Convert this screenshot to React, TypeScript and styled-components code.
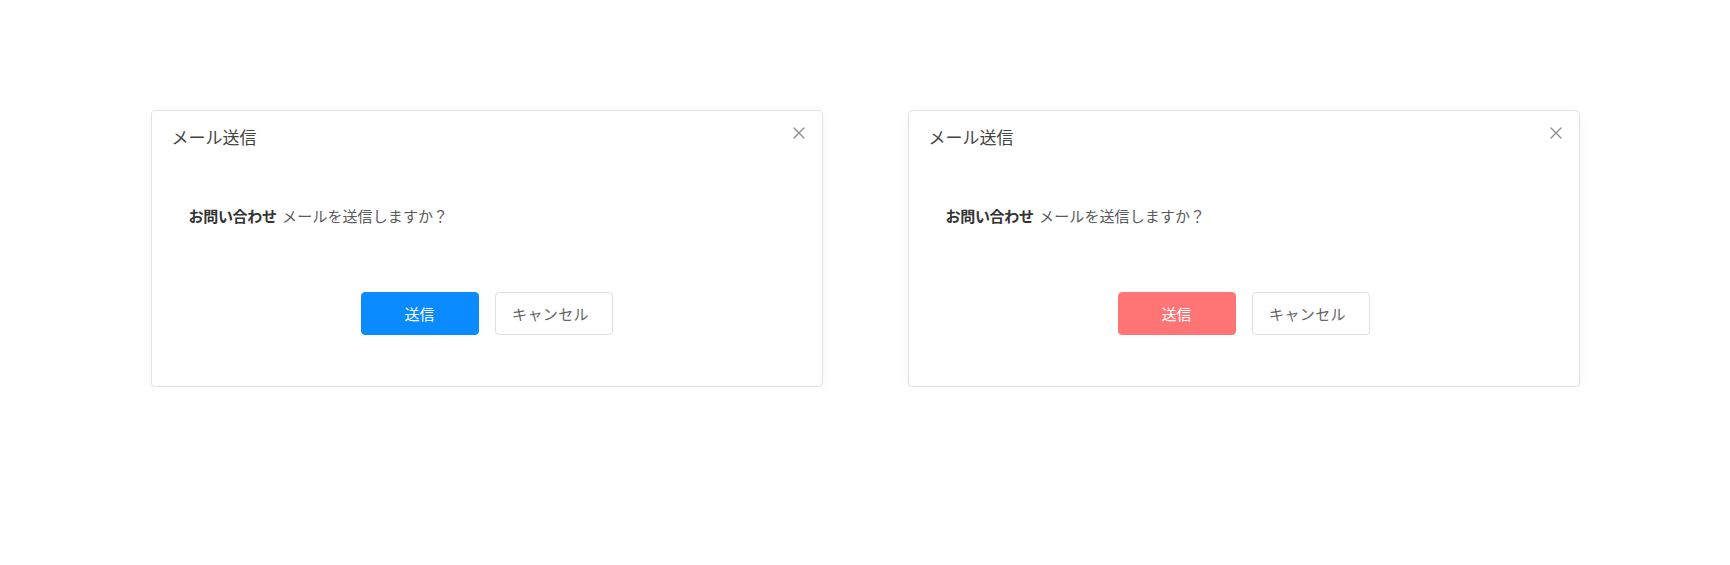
import React from "react";
import styled, { createGlobalStyle } from "styled-components";

const GlobalStyle = createGlobalStyle`
  html, body {
    margin: 0;
    padding: 0;
    background: #ffffff;
  }
  body {
    font-family: "Noto Sans CJK JP", "Noto Sans", sans-serif;
    color: #333;
  }
`;

const Page = styled.div`
  display: flex;
  justify-content: center;
  align-items: flex-start;
  gap: 85px;
  padding-top: 110px;
`;

const Dialog = styled.div`
  position: relative;
  box-sizing: border-box;
  width: 672px;
  height: 277px;
  background: #fff;
  border: 1px solid #e2e2ea;
  border-radius: 4px;
  box-shadow: 0 4px 14px rgba(0, 0, 0, 0.04);
  display: flex;
  flex-direction: column;
`;

const Header = styled.div`
  padding: 14px 20px 0;
`;

const Title = styled.div`
  font-size: 17px;
  line-height: 24px;
  font-weight: 400;
  color: #444;
`;

const CloseButton = styled.button`
  position: absolute;
  top: 15px;
  right: 16px;
  width: 14px;
  height: 14px;
  padding: 0;
  border: none;
  background: transparent;
  display: flex;
  align-items: center;
  justify-content: center;
  cursor: pointer;
`;

const Body = styled.div`
  margin-top: 56px;
  padding-left: 37px;
  font-size: 15px;
  line-height: 22px;
  color: #5a5a5a;
`;

const Strong = styled.strong`
  font-weight: 700;
  color: #333;
  letter-spacing: -0.3px;
  margin-right: 2px;
`;

const Message = styled.span`
  letter-spacing: 0.1px;
`;

const Footer = styled.div`
  margin-top: 65px;
  display: flex;
  justify-content: center;
  gap: 16px;
`;

const Button = styled.button<{ $variant: "primary" | "danger" | "default" }>`
  box-sizing: border-box;
  width: 118px;
  height: 43px;
  padding: 0 ${(p) => (p.$variant === "default" ? "6px" : "0")} 0 0;
  border-radius: 4px;
  font-family: "Noto Sans CJK JP", "Noto Sans", sans-serif;
  font-size: 15px;
  letter-spacing: ${(p) => (p.$variant === "default" ? "0.4px" : "0")};
  cursor: pointer;
  display: flex;
  align-items: center;
  justify-content: center;
  border: 1px solid
    ${(p) =>
      p.$variant === "primary"
        ? "#0a8bff"
        : p.$variant === "danger"
        ? "#ff7575"
        : "#e0e0e8"};
  background: ${(p) =>
    p.$variant === "primary"
      ? "#0a8bff"
      : p.$variant === "danger"
      ? "#ff7575"
      : "#ffffff"};
  color: ${(p) => (p.$variant === "default" ? "#666" : "#ffffff")};
`;

const CloseIcon = () => (
  <svg width="12" height="12" viewBox="0 0 12 12" fill="none">
    <path d="M1 1L11 11M11 1L1 11" stroke="#8a8a92" strokeWidth="1.3" strokeLinecap="round" />
  </svg>
);

const MailDialog: React.FC<{ variant: "primary" | "danger" }> = ({ variant }) => (
  <Dialog>
    <Header>
      <Title>メール送信</Title>
    </Header>
    <CloseButton aria-label="閉じる">
      <CloseIcon />
    </CloseButton>
    <Body>
      <Strong>お問い合わせ</Strong> <Message>メールを送信しますか？</Message>
    </Body>
    <Footer>
      <Button $variant={variant}>送信</Button>
      <Button $variant="default">キャンセル</Button>
    </Footer>
  </Dialog>
);

export default function App() {
  return (
    <>
      <GlobalStyle />
      <Page>
        <MailDialog variant="primary" />
        <MailDialog variant="danger" />
      </Page>
    </>
  );
}
